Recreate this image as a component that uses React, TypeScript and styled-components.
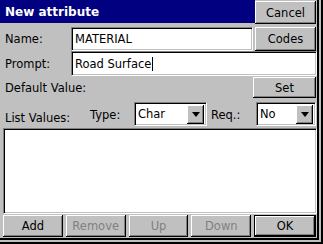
import styled, { createGlobalStyle } from "styled-components";

const GlobalStyle = createGlobalStyle`
  html, body {
    margin: 0;
    padding: 0;
    background: #c0c0c0;
  }
  body {
    font-family: "DejaVu Sans", Verdana, sans-serif;
    font-size: 11.5px;
    color: #000;
  }
`;

const Screen = styled.div`
  width: 323px;
  height: 244px;
  box-sizing: border-box;
  background: #c0c0c0;
  border-right: 2px solid #000;
  border-bottom: 2px solid #000;
  padding: 0 2px 2px 0;
`;

const Dialog = styled.div`
  height: 100%;
  box-sizing: border-box;
  border-right: 2px solid #000;
  border-bottom: 2px solid #000;
  display: flex;
  flex-direction: column;
`;

const Row = styled.div<{ $h: number; $top?: number }>`
  display: flex;
  align-items: center;
  height: ${(p) => p.$h}px;
  margin-top: ${(p) => p.$top || 0}px;
  flex-shrink: 0;
`;

const TitleBar = styled.div`
  width: 255px;
  height: 23px;
  align-self: flex-start;
  background: #000080;
  color: #fff;
  font-weight: bold;
  font-size: 12px;
  padding-left: 5px;
  box-sizing: border-box;
  display: flex;
  align-items: center;
`;

const Label = styled.div<{ $w?: number; $pad?: number; $drop?: number }>`
  width: ${(p) => (p.$w ? `${p.$w}px` : "auto")};
  flex: ${(p) => (p.$w ? "none" : 1)};
  padding-left: ${(p) => p.$pad ?? 0}px;
  padding-top: ${(p) => p.$drop ?? 0}px;
  box-sizing: border-box;
  white-space: nowrap;
`;

const Button = styled.button<{ $w?: number; $h?: number; $default?: boolean; $gap?: number }>`
  width: ${(p) => (p.$w ? `${p.$w}px` : "auto")};
  flex: ${(p) => (p.$w ? "none" : 1)};
  height: ${(p) => p.$h ?? 22}px;
  margin-left: ${(p) => p.$gap ?? 0}px;
  padding: 0;
  font-family: inherit;
  font-size: 11.5px;
  color: #000;
  background: #c0c0c0;
  box-sizing: border-box;
  border: ${(p) => (p.$default ? "1px solid #000" : "none")};
  box-shadow: inset -1px -1px #000, inset 1px 1px #fff, inset -2px -2px #808080;

  &:disabled {
    color: #808080;
  }
`;

const Field = styled.div<{ $w: number; $h: number }>`
  width: ${(p) => p.$w}px;
  height: ${(p) => p.$h}px;
  box-sizing: border-box;
  background: #fff;
  border-top: 1px solid #808080;
  border-left: 1px solid #808080;
  border-right: 1px solid #fff;
  border-bottom: 1px solid #fff;
  box-shadow: inset 1px 1px #000, inset -1px -1px #c0c0c0;
  padding-left: 3px;
  display: flex;
  align-items: center;
  white-space: nowrap;
`;

const Caret = styled.span`
  display: inline-block;
  width: 1px;
  height: 14px;
  background: #000;
  margin-left: 1px;
`;

const Select = styled(Field)`
  padding-right: 2px;
`;

const SelectText = styled.span`
  flex: 1;
`;

const DropButton = styled.div`
  width: 17px;
  height: 19px;
  margin-top: 1px;
  background: #c0c0c0;
  box-shadow: inset -1px -1px #000, inset 1px 1px #fff, inset -2px -2px #808080;
  display: flex;
  align-items: center;
  justify-content: center;

  &::after {
    content: "";
    border-left: 4px solid transparent;
    border-right: 4px solid transparent;
    border-top: 5px solid #000;
  }
`;

const ListBox = styled(Field)<{ $w: number; $h: number }>`
  margin: 2px 0 0 3px;
  flex-shrink: 0;
`;

const ButtonBar = styled(Row)`
  padding: 0 1px 0 3px;
  gap: 3px;
`;

const App = () => {
  return (
    <>
      <GlobalStyle />
      <Screen>
        <Dialog>
          <Row $h={24}>
            <TitleBar>New attribute</TitleBar>
            <Button $w={61} $h={23} style={{ alignSelf: "flex-end" }}>
              Cancel
            </Button>
          </Row>
          <Row $h={24} $top={3}>
            <Label $w={71} $pad={5}>Name:</Label>
            <Field $w={182} $h={24}>MATERIAL</Field>
            <Button $w={61} $h={24} $gap={2}>Codes</Button>
          </Row>
          <Row $h={25}>
            <Label $w={71} $pad={5}>Prompt:</Label>
            <Field $w={246} $h={25}>
              Road Surface<Caret />
            </Field>
          </Row>
          <Row $h={21} $top={1}>
            <Label $pad={5}>Default Value:</Label>
            <Button $w={63} $h={21} style={{ marginRight: 1 }}>Set</Button>
          </Row>
          <Row $h={24} $top={4}>
            <Label $w={90} $pad={5} $drop={8}>List Values:</Label>
            <Label $w={44} $drop={2}>Type:</Label>
            <Select $w={73} $h={24}>
              <SelectText>Char</SelectText>
              <DropButton />
            </Select>
            <Label $w={49} $pad={4} $drop={2}>Req.:</Label>
            <Select $w={60} $h={24}>
              <SelectText>No</SelectText>
              <DropButton />
            </Select>
          </Row>
          <ListBox $w={314} $h={86} />
          <ButtonBar $h={22} $top={1}>
            <Button>Add</Button>
            <Button disabled>Remove</Button>
            <Button disabled>Up</Button>
            <Button disabled>Down</Button>
            <Button $default>OK</Button>
          </ButtonBar>
        </Dialog>
      </Screen>
    </>
  );
};

export default App;
